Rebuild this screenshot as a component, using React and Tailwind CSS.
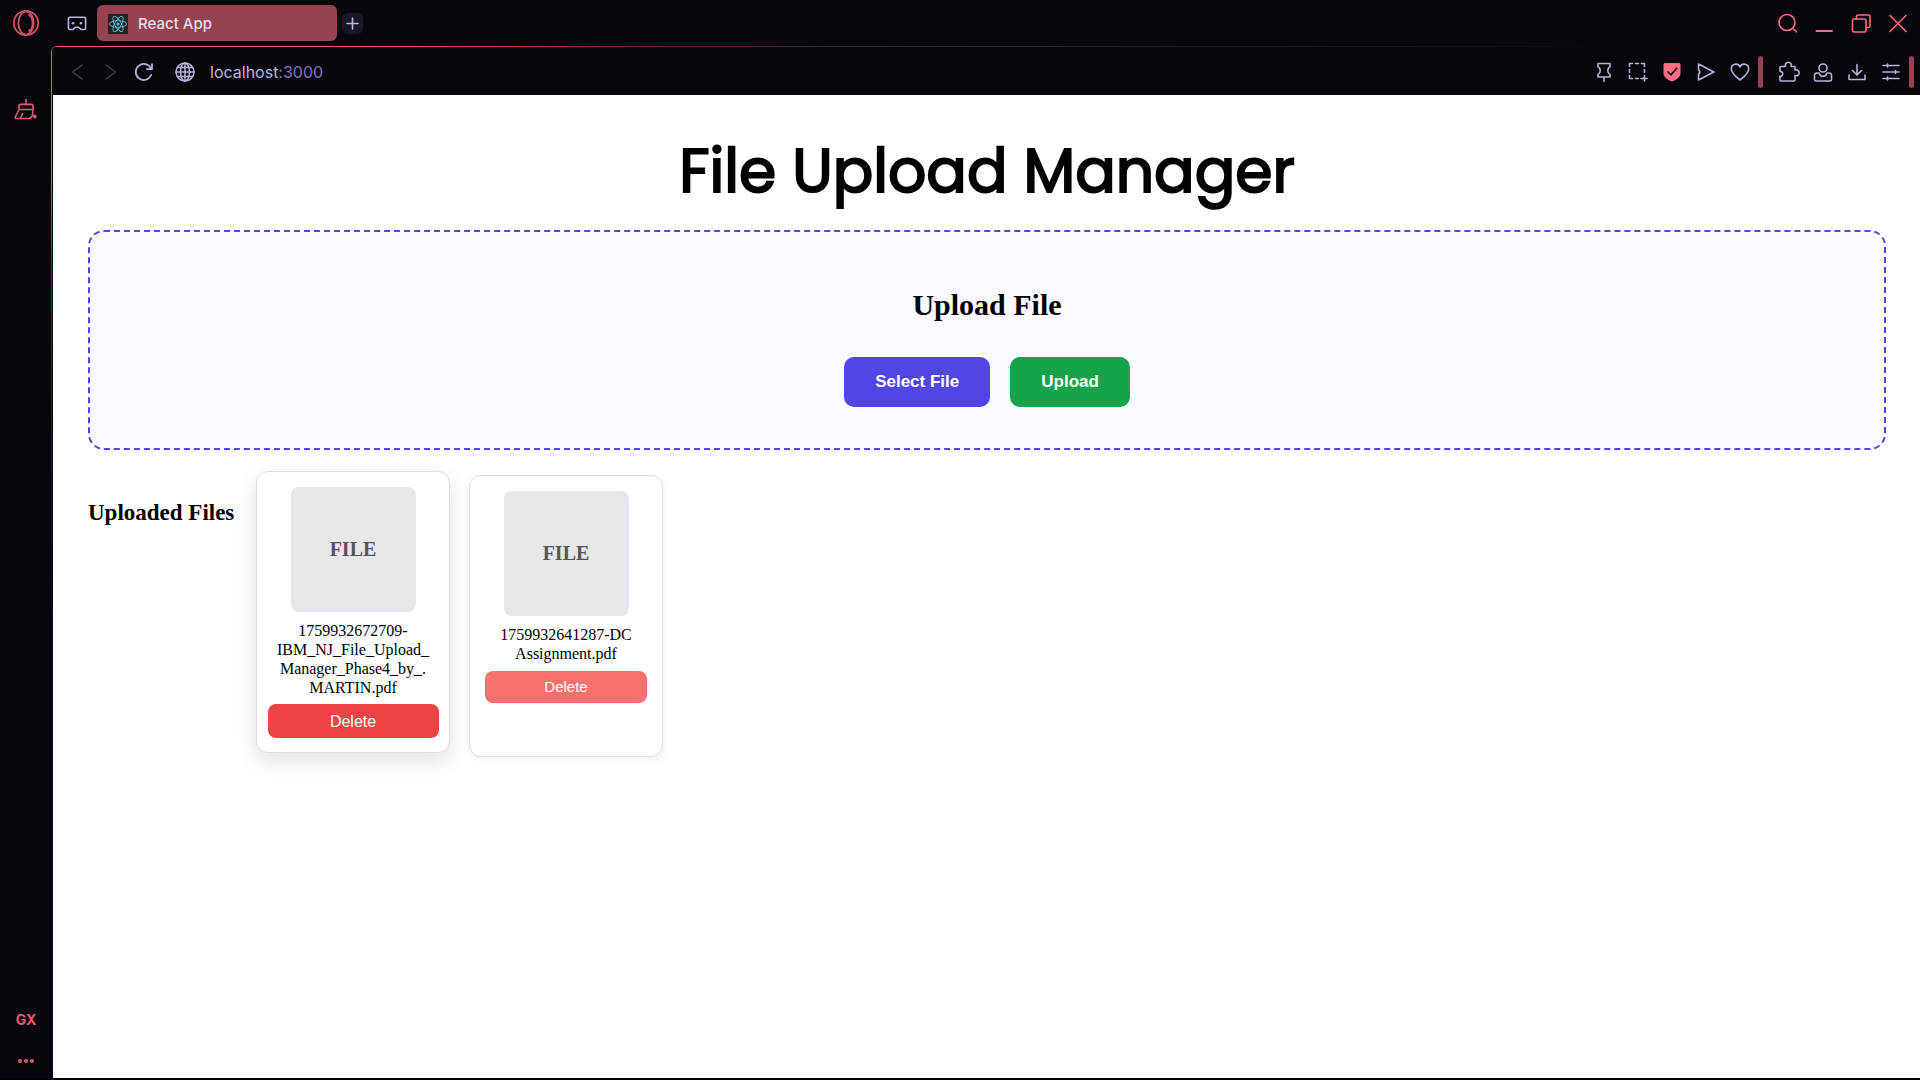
const strokeProps = { fill: 'none', stroke: 'currentColor', strokeLinecap: 'round', strokeLinejoin: 'round' };

function Icon({ size = 20, width = 1.4, className = '', children }) {
  return (
    <svg width={size} height={size} viewBox={`0 0 ${size} ${size}`} strokeWidth={width} className={className} aria-hidden="true" {...strokeProps}>
      {children}
    </svg>
  );
}

function IconButton({ label, className = '', children }) {
  return (
    <button type="button" aria-label={label} className={`flex shrink-0 items-center justify-center ${className}`}>
      {children}
    </button>
  );
}

function ReactLogo() {
  return (
    <svg width="20" height="20" viewBox="0 0 20 20" fill="none" stroke="#53c1de" strokeWidth="0.9" aria-hidden="true">
      <rect width="20" height="20" rx="1" fill="#222" stroke="none" />
      <ellipse cx="10" cy="10" rx="8.6" ry="3.3" />
      <ellipse cx="10" cy="10" rx="8.6" ry="3.3" transform="rotate(60 10 10)" />
      <ellipse cx="10" cy="10" rx="8.6" ry="3.3" transform="rotate(120 10 10)" />
      <circle cx="10" cy="10" r="1.6" fill="#53c1de" stroke="none" />
    </svg>
  );
}

function Sidebar() {
  return (
    <aside className="flex w-[51px] shrink-0 flex-col items-center pl-px text-[#e4596f]">
      <IconButton label="Opera menu" className="mt-[9px] h-7 w-7">
        <Icon size={28} width={1.8} className="text-[#cf5264]">
          <circle cx="14" cy="14" r="12.2" />
          <ellipse cx="14" cy="14" rx="7.6" ry="11.6" />
          <path d="M17 6.200c4.800 2 4.800 13.600 0 15.600" />
        </Icon>
      </IconButton>
      <IconButton label="Cleaner" className="mt-[60px] h-6 w-6">
        <Icon size={24} width={1.6}>
          <path d="M12 2.500v5M5 12.500V9a1.600 1.600 0 0 1 1.600-1.600h10.800A1.600 1.600 0 0 1 19 9v3.500H5L1.300 20a1 1 0 0 0 .9 1.500h12.600c2.600 0 4.200-3 4.200-9M6.200 21.300l2.600-4.800" />
          <circle cx="20.800" cy="19.500" r="1.900" fill="currentColor" stroke="none" />
        </Icon>
      </IconButton>
      <button type="button" className="mt-auto font-[Inter,sans-serif] text-sm leading-5 font-bold">GX</button>
      <IconButton label="More" className="mt-[21px] mb-[7px] h-5 w-6">
        <svg width="18" height="6" viewBox="0 0 18 6" fill="currentColor" aria-hidden="true">
          <circle cx="3" cy="3" r="2" />
          <circle cx="9" cy="3" r="2" />
          <circle cx="15" cy="3" r="2" />
        </svg>
      </IconButton>
    </aside>
  );
}

function TabStrip() {
  return (
    <header className="flex h-[46px] shrink-0 items-center pr-3">
      <IconButton label="Workspaces" className="ml-4 h-5 w-5">
        <Icon size={20} width={1.600} className="text-[#b9b8e0]">
          <path d="M3 4.300h14a1.600 1.600 0 0 1 1.600 1.600v9a1.600 1.600 0 0 1-1.600 1.600h-3l-2.300-2.300H8.300L6 16.500H3a1.600 1.600 0 0 1-1.600-1.600v-9A1.600 1.600 0 0 1 3 4.300z" />
          <circle cx="6" cy="10.300" r="1.300" fill="currentColor" stroke="none" />
          <circle cx="14" cy="10.300" r="1.300" fill="currentColor" stroke="none" />
        </Icon>
      </IconButton>
      <button type="button" className="ml-2.5 flex h-9 w-60 items-center gap-2.5 rounded-md bg-[#954350] px-[11px] pt-px font-[Inter,sans-serif] text-[15px] leading-5 font-medium text-[#e6dcec]">
        <ReactLogo />
        React App
      </button>
      <IconButton label="New tab" className="ml-[5px] h-[21px] w-[21px] rounded-md bg-[#191628] text-[#b9b8e0]">
        <Icon size={13} width={1.600}><path d="M6.500 1v11M1 6.500h11" /></Icon>
      </IconButton>
      <div className="ml-auto flex items-center gap-[17px] text-[#fa6c80]">
        <IconButton label="Search">
          <Icon width={1.600}><circle cx="10" cy="9.500" r="8" /><path d="M15.800 15.300l3.700 3.700" /></Icon>
        </IconButton>
        <IconButton label="Minimize">
          <Icon width={1.800}><path d="M2.500 18h15.500" /></Icon>
        </IconButton>
        <IconButton label="Restore">
          <Icon width={1.600}>
            <rect x="1.500" y="6" width="13.500" height="13" rx="1.500" />
            <path d="M5.500 6V3.500A1.500 1.500 0 0 1 7 2h10.500A1.500 1.500 0 0 1 19 3.500v9.500a1.500 1.500 0 0 1-1.500 1.500H15" />
          </Icon>
        </IconButton>
        <IconButton label="Close">
          <Icon width={1.600}><path d="M2 2.500l16 16M18 2.500l-16 16" /></Icon>
        </IconButton>
      </div>
    </header>
  );
}

function Toolbar() {
  return (
    <nav className="flex h-12 shrink-0 items-center overflow-hidden rounded-tl bg-[#07060d] pt-0.5 pr-[6px] text-[#b5b3dc]">
      <IconButton label="Back" className="ml-[15px] text-[#403d4d]">
        <Icon width={1.500}><path d="M14 3L4.500 10l9.500 7" /></Icon>
      </IconButton>
      <IconButton label="Forward" className="ml-3 text-[#403d4d]">
        <Icon width={1.500}><path d="M6 3l9.500 7L6 17" /></Icon>
      </IconButton>
      <IconButton label="Reload" className="ml-[14px]">
        <Icon width={1.700}><path d="M17.300 12.800A8 8 0 1 1 17 6.500M18 2v5.200h-5.200" /></Icon>
      </IconButton>
      <IconButton label="Site information" className="ml-[21px]">
        <Icon width={1.500}>
          <circle cx="10" cy="10" r="9" />
          <ellipse cx="10" cy="10" rx="4.500" ry="9" />
          <path d="M10 1v18M1 10h18M2.500 5.500h15M2.500 14.500h15" />
        </Icon>
      </IconButton>
      <a href="#" className="ml-[15px] font-[Inter,sans-serif] text-base leading-6 text-[#b9b7dc]">
        localhost<span className="text-[#7c77b5]">:3000</span>
      </a>

      <div className="ml-auto flex items-center gap-[14px]">
        <IconButton label="Pin">
          <Icon width={1.600}>
            <path d="M4 1.500h12v3.200c-3 1.500-3 6.300 0 7.800v2.500H4v-2.500c3-1.500 3-6.300 0-7.800zM10 15v4.200" />
          </Icon>
        </IconButton>
        <IconButton label="Snapshot">
          <Icon width={1.600}>
            <path d="M1.500 4.500v-3h3M7.500 1.500h3M13.500 1.500h3v3M16.500 7.500v3M1.500 7.500v3M1.500 13.500v3h3M7.500 16.500h3M13 16.500h6M16.500 13.500v5.500" />
          </Icon>
        </IconButton>
        <IconButton label="Ad blocker">
          <svg width="20" height="20" viewBox="0 0 20 20" fill="none" aria-hidden="true">
            <path d="M3 1h14a1.500 1.500 0 0 1 1.500 1.500V11c0 4-3.500 6.500-8.500 8.500C5 17.500 1.500 15 1.500 11V2.500A1.500 1.500 0 0 1 3 1z" fill="#fb6f86" />
            <path d="M5.500 9.500l3.500 3.300 6-7" stroke="#07060d" strokeWidth="1.600" />
          </svg>
        </IconButton>
        <IconButton label="Send">
          <Icon width={1.600}><path d="M2.500 2l15.500 8L2.500 18V12.500l1.500-2.500-1.500-2.500z" /></Icon>
        </IconButton>
        <IconButton label="Favourite">
          <Icon width={1.600}><path d="M10 18C6 15 1.300 11 1.300 6.800c0-5.300 6.700-6.300 8.700-2 2-4.300 8.700-3.300 8.700 2C18.700 11 14 15 10 18z" /></Icon>
        </IconButton>
      </div>
      <span className="ml-2 h-8 w-[5px] shrink-0 rounded bg-[#954350]" />
      <div className="ml-[15px] flex items-center gap-[14px]">
        <IconButton label="Extensions">
          <Icon size={22} width={1.600}>
            <path d="M3 5.500h4.500c-.8-2.200.6-4.300 2.800-4.300s3.600 2.100 2.800 4.300H17V9c2.300-.6 4.200.7 4.200 2.800S19.300 15.200 17 14.600V19a1 1 0 0 1-1 1H3a1 1 0 0 1-1-1v-3.600c3.600.6 3.600-5.400 0-5V6.500a1 1 0 0 1 1-1z" />
          </Icon>
        </IconButton>
        <IconButton label="Profile" className="-ml-px">
          <Icon width={1.600}>
            <circle cx="10" cy="6" r="4" />
            <path d="M6 11H4a2.500 2.500 0 0 0-2.500 2.500v4A1.500 1.500 0 0 0 3 19h14a1.500 1.500 0 0 0 1.500-1.500v-4A2.500 2.500 0 0 0 16 11h-2c-1.500 4.500-6.500 4.500-8 0z" />
          </Icon>
        </IconButton>
        <IconButton label="Downloads">
          <Icon width={1.600}><path d="M10 2.500v10M5.500 8.500l4.500 4.500 4.500-4.500M2 13v4.500h16V13" /></Icon>
        </IconButton>
        <IconButton label="Settings">
          <Icon width={1.600}><path d="M2 3.500h16M2 10h16M2 16.500h16M6.500 2v3M14.500 8.500v3M6.500 15v3" /></Icon>
        </IconButton>
      </div>
      <span className="ml-2 h-8 w-[5px] shrink-0 rounded bg-[#954350]" />
    </nav>
  );
}

const files = [
  { name: ['1759932672709-', 'IBM_NJ_File_Upload_', 'Manager_Phase4_by_.', 'MARTIN.pdf'], active: true },
  { name: ['1759932641287-DC', 'Assignment.pdf'], active: false },
];

function FileCard({ name, active }) {
  return (
    <li
      className={`flex w-[194px] flex-col items-center rounded-xl border border-[#ddd] bg-white p-[15px] ${
        active ? '-mt-1 mb-1 shadow-[0_8px_20px_rgba(0,0,0,0.12)]' : 'shadow-[0_3px_8px_rgba(0,0,0,0.06)]'
      }`}
    >
      <div className="flex h-[125px] w-[125px] items-center justify-center rounded-lg bg-gray-200 pb-px text-xl font-bold text-[#555]">
        FILE
      </div>
      <p className="mt-[9px] text-center text-base leading-[19px] whitespace-pre-line">{name.join('\n')}</p>
      <button
        type="button"
        className={`rounded-lg font-['Liberation_Sans',Arial,sans-serif] text-white ${
          active ? 'mt-[7px] -mb-px h-[34px] w-[171px] bg-[#ef4444] pt-px text-base' : 'mt-2 h-8 w-full bg-[#f87171] text-[15px]'
        }`}
      >
        Delete
      </button>
    </li>
  );
}

function UploadManager() {
  return (
    <main className="flex-1 bg-white pr-[34px] pl-[35px] font-['Liberation_Serif','Times_New_Roman',serif] text-black">
      <h1 className="pt-[38px] text-center font-[Poppins,Inter,sans-serif] text-[60px] leading-[76px] font-normal [-webkit-text-stroke:2px_black]">
        File Upload Manager
      </h1>
      <section className="mt-[21px] flex h-[220px] flex-col items-center rounded-2xl border-2 border-dashed border-[#4f46e5] bg-[#f9f9ff]">
        <h2 className="mt-[55px] text-[30px] leading-9 font-bold">Upload File</h2>
        <div className="mt-[34px] flex gap-5 font-['Liberation_Sans',Arial,sans-serif] text-[17px] leading-5 font-bold text-white">
          <button type="button" className="h-[50px] rounded-[10px] bg-[#4f46e5] px-[31px]">Select File</button>
          <button type="button" className="h-[50px] rounded-[10px] bg-[#16a34a] px-[31px]">Upload</button>
        </div>
      </section>
      <section className="mt-[25px] flex items-start gap-5">
        <h3 className="mt-6 w-[148px] text-[23px] leading-7 font-bold whitespace-nowrap">Uploaded Files</h3>
        <ul className="flex items-stretch gap-[19px]">
          {files.map((file) => (
            <FileCard key={file.name[0]} {...file} />
          ))}
        </ul>
      </section>
    </main>
  );
}

export default function App() {
  return (
    <div className="flex min-h-screen border-b-2 border-black bg-[#07060d]">
      <Sidebar />
      <div className="flex min-w-0 flex-1 flex-col">
        <TabStrip />
        <div className="flex flex-1 flex-col rounded-tl-md bg-[radial-gradient(ellipse_1600px_620px_at_top_left,#e45a70_0%,#e45a70_20%,#5e2635_38%,#07060d_100%)] pt-px pl-px">
          <div className="flex flex-1 flex-col rounded-tl bg-[#07060d] pl-px">
            <Toolbar />
            <UploadManager />
          </div>
        </div>
      </div>
    </div>
  );
}
